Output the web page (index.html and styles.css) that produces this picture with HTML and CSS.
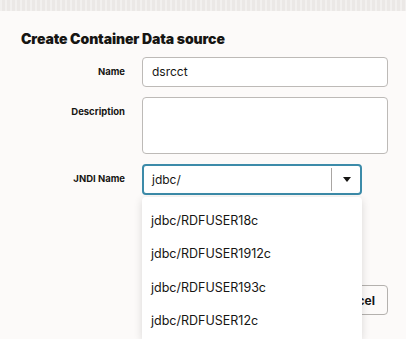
FILE: index.html
```html
<!DOCTYPE html>
<html>
<head>
<meta charset="utf-8">
<title>Create Container Data source</title>
<link rel="stylesheet" href="styles.css">
</head>
<body>

<div class="top_band"></div>

<div class="dialog">
	<h1 class="title">Create Container Data source</h1>

	<div class="form">
		<label class="label">Name</label>
		<div class="input">dsrcct</div>

		<label class="label">Description</label>
		<div class="textarea"></div>

		<label class="label">JNDI Name</label>
		<div class="combo">
			<div class="select">
				<span class="select_text">jdbc/</span>
				<span class="select_btn"><span class="arrow"></span></span>
			</div>
			<!-- 下拉列表 -->
			<ul class="dropdown">
				<li>jdbc/RDFUSER18c</li>
				<li>jdbc/RDFUSER1912c</li>
				<li>jdbc/RDFUSER193c</li>
				<li>jdbc/RDFUSER12c</li>
			</ul>
		</div>
	</div>

	<div class="footer">
		<button class="btn">Cancel</button>
	</div>
</div>

</body>
</html>
```

FILE: styles.css
```css
html,body{margin:0;padding:0;background:#fcfaf9;font-family:Inter,"Liberation Sans",sans-serif;color:#161513;}
body{min-height:339px;}

.top_band {
	height: 11px;
	background-color: #ebe8e6;
	background-image: repeating-linear-gradient(90deg, rgba(255,255,255,0.35) 0 2px, transparent 2px 5px);
}

.dialog {
	padding: 0 18px 0 21px;
}
.title {
	margin: 18px 0 8px;
	font-size: 14px;
	font-weight: 900;
	line-height: 20px;
	letter-spacing: -0.1px;
}

.form {
	display: grid;
	grid-template-columns: 104px 246px;
	column-gap: 17px;
	row-gap: 10px;
}
.label {
	justify-self: end;
	align-self: start;
	line-height: 30px;
	font-size: 9.5px;
	font-weight: 700;
}
.input {
	height: 28px;
	line-height: 28px;
	padding: 0 9px;
	border: 1px solid #bdbab7;
	border-radius: 4px;
	background: #fff;
	font-size: 12px;
}
.textarea {
	height: 55px;
	border: 1px solid #bdbab7;
	border-radius: 4px;
	background: #fff;
}

.combo {
	position: relative;
	width: 220px;
}
.select {
	display: flex;
	align-items: center;
	height: 25px;
	border: 2px solid #3c8ba9;
	border-radius: 4px;
	background: #fff;
	padding: 1px 0;
}
.select_text {
	flex: 1;
	padding-left: 8px;
	font-size: 12px;
}
.select_btn {
	display: flex;
	align-items: center;
	justify-content: center;
	width: 28px;
	height: 23px;
	border-left: 1px solid #a9a6a3;
}
.arrow {
	width: 0;
	height: 0;
	border-left: 4.5px solid transparent;
	border-right: 4.5px solid transparent;
	border-top: 5px solid #161513;
	margin-left: 1px;
}

.dropdown {
	position: absolute;
	top: 33px;
	left: 0;
	width: 220px;
	height: 135px;
	margin: 0;
	padding: 7px 0 0;
	overflow: hidden;
	list-style: none;
	background: #fff;
	border-radius: 4px 4px 0 0;
	box-shadow: 0 2px 8px rgba(0,0,0,0.14);
	z-index: 2;
}
.dropdown li {
	height: 33.3px;
	line-height: 33.3px;
	padding-left: 9px;
	font-size: 12.5px;
}

.footer {
	display: flex;
	justify-content: flex-end;
	width: 367px;
	margin-top: 90px;
}
.btn {
	height: 30px;
	padding: 0 12px;
	border: 1px solid #b4b1ae;
	border-radius: 4px;
	background: #fcfaf9;
	font-family: Inter,"Liberation Sans",sans-serif;
	font-size: 12px;
	font-weight: 700;
	color: #161513;
}
```
